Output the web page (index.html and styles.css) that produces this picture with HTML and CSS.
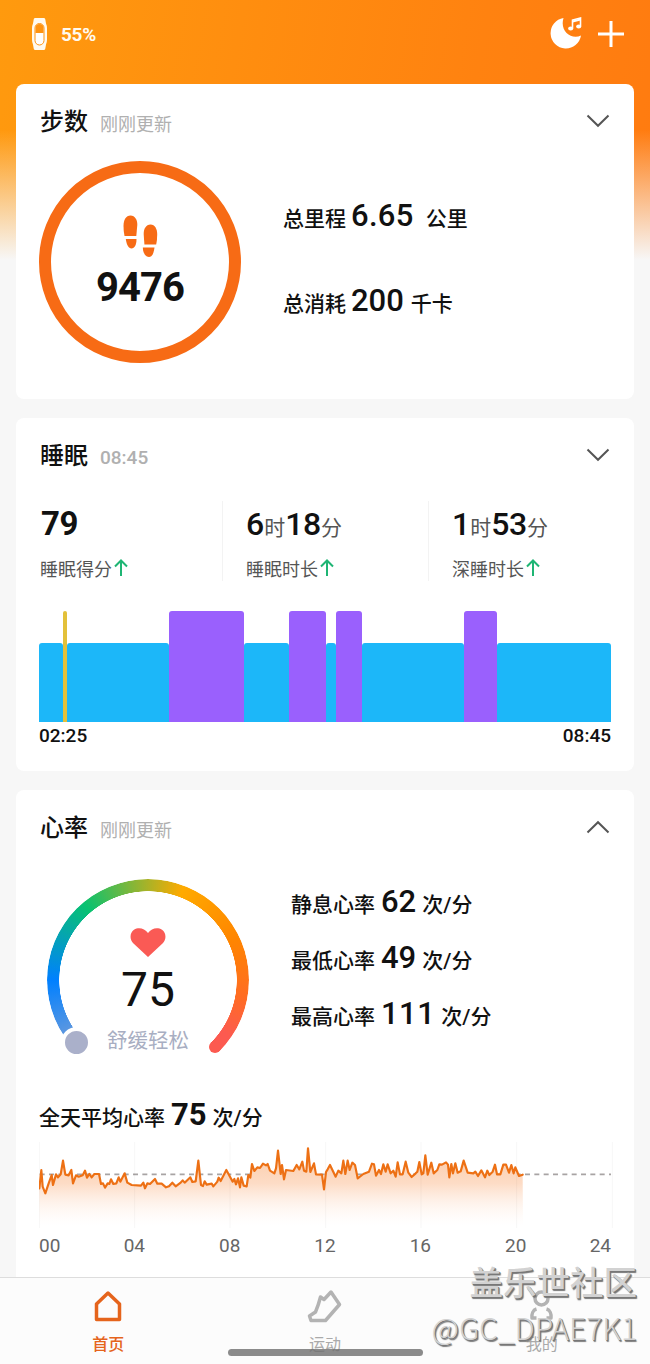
FILE: index.html
```html
<!DOCTYPE html>
<html lang="zh-CN">
<head>
    <meta charset="UTF-8">
    <meta name="viewport" content="width=device-width, initial-scale=1.0">
    <link rel="stylesheet" href="styles.css">
    <title>首页</title>
</head>
<body>
    <header class="topbar">
        <svg class="band-icon" width="15" height="32" viewBox="0 0 15 32">
            <path d="M3 0h9a1.500 1.500 0 0 1 1.300 1.500L14 5.500q1 2 1 5v11q0 3-1 5l-.7 4A1.500 1.500 0 0 1 12 32H3a1.500 1.500 0 0 1-1.300-1.500L1 26.500q-1-2-1-5v-11q0-3 1-5l.7-4A1.500 1.500 0 0 1 3 0z" fill="#fffaf0"/>
            <rect x="3" y="5.500" width="9" height="21.500" rx="4.500" fill="#fff" stroke="#ff9310" stroke-width="1"/>
            <path d="M3.500 15v-5a4 4 0 0 1 8 0v5z" fill="#ff9310"/>
        </svg>
        <span class="battery">55%</span>
        <svg class="moon-icon" width="33" height="32" viewBox="0 0 33 32">
            <path d="M13.500 1A15.300 15.300 0 1 0 31 18.500C21 23 9.500 14 13.500 1z" fill="#fff"/>
            <path d="M22.500 11V3l8-2v8" fill="none" stroke="#fff" stroke-width="1.600"/>
            <path d="M22.500 4.500l8-2" stroke="#fff" stroke-width="2"/>
            <ellipse cx="20.700" cy="11.500" rx="2.600" ry="2" fill="#fff"/>
            <ellipse cx="28.700" cy="9.500" rx="2.600" ry="2" fill="#fff"/>
        </svg>
        <svg class="plus-icon" width="26" height="26" viewBox="0 0 26 26">
            <path d="M13 0v26M0 13h26" stroke="#fff" stroke-width="3"/>
        </svg>
    </header>

    <main class="cards">
        <!-- 步数 -->
        <section class="card card-steps">
            <div class="card-head">
                <h2>步数</h2>
                <span class="sub">刚刚更新</span>
                <svg class="chevron" width="24" height="14" viewBox="0 0 24 14"><path d="M1.500 1.500L12 11.800 22.500 1.500"/></svg>
            </div>
            <div class="steps-body">
                <div class="ring">
                    <svg width="35" height="43" viewBox="0 0 35 43" fill="#f76b15">
                        <path d="M7.500.5C12 .5 14.500 5 14.300 10L13.300 21H1.500Q.5 16 .5 11C.5 5 3 .5 7.500.5z"/>
                        <path d="M2.800 24h10.700c0 6-2 9.500-5 9.500S3.500 29.500 2.800 24z"/>
                        <path d="M27.500 9.500C23 9.500 20.500 14 20.700 19l.7 10.500h11.800q1-5 1-10C34.200 14 32 9.500 27.500 9.500z"/>
                        <path d="M19.800 32.500h11.700c-.7 6-2.500 9.500-5.500 9.500s-6-3-6.200-9.500z"/>
                    </svg>
                    <strong>9476</strong>
                </div>
                <div class="stats stats-steps">
                    <p>总里程<b class="wide">6.65</b>公里</p>
                    <p>总消耗<b>200</b>千卡</p>
                </div>
            </div>
        </section>

        <!-- 睡眠 -->
        <section class="card card-sleep">
            <div class="card-head">
                <h2>睡眠</h2>
                <span class="sub time">08:45</span>
                <svg class="chevron" width="24" height="14" viewBox="0 0 24 14"><path d="M1.500 1.500L12 11.800 22.500 1.500"/></svg>
            </div>
            <div class="sleep-stats">
                <div class="sleep-item">
                    <div class="value score">79</div>
                    <div class="label">睡眠得分<svg width="14" height="18" viewBox="0 0 14 18"><path d="M7 17V2M1 7.500L7 1.500l6 6"/></svg></div>
                </div>
                <div class="sleep-item">
                    <div class="value">6<i>时</i>18<i>分</i></div>
                    <div class="label">睡眠时长<svg width="14" height="18" viewBox="0 0 14 18"><path d="M7 17V2M1 7.500L7 1.500l6 6"/></svg></div>
                </div>
                <div class="sleep-item">
                    <div class="value">1<i>时</i>53<i>分</i></div>
                    <div class="label">深睡时长<svg width="14" height="18" viewBox="0 0 14 18"><path d="M7 17V2M1 7.500L7 1.500l6 6"/></svg></div>
                </div>
            </div>
            <div class="sleep-chart">
                <span class="light" style="flex-grow: 24"></span>
                <span class="awake" style="flex-grow: 3.5"></span>
                <span class="light" style="flex-grow: 102"></span>
                <span class="deep" style="flex-grow: 75.5"></span>
                <span class="light" style="flex-grow: 45"></span>
                <span class="deep" style="flex-grow: 36.5"></span>
                <span class="light" style="flex-grow: 10"></span>
                <span class="deep" style="flex-grow: 26"></span>
                <span class="light" style="flex-grow: 102"></span>
                <span class="deep" style="flex-grow: 33.5"></span>
                <span class="light" style="flex-grow: 114"></span>
            </div>
            <div class="sleep-times"><span>02:25</span><span>08:45</span></div>
        </section>

        <!-- 心率 -->
        <section class="card card-heart">
            <div class="card-head">
                <h2>心率</h2>
                <span class="sub">刚刚更新</span>
                <svg class="chevron" width="24" height="14" viewBox="0 0 24 14"><path d="M1.500 12.500L12 2.200 22.500 12.500"/></svg>
            </div>
            <div class="heart-body">
                <div class="gauge">
                    <div class="gauge-arc"></div>
                    <span class="gauge-end"></span>
                    <span class="gauge-knob"></span>
                    <svg width="36" height="29" viewBox="0 0 36 29"><path d="M18 29L3.500 15.500C-1 11 0 4.500 4 1.800 8.500-1 14.500.2 18 5 21.500.2 27.500-1 32 1.800c4 2.700 5 9.200.5 13.700z" fill="#fa5a55"/></svg>
                    <strong>75</strong>
                    <em>舒缓轻松</em>
                </div>
                <div class="stats stats-heart">
                    <p>静息心率<b>62</b>次/分</p>
                    <p>最低心率<b>49</b>次/分</p>
                    <p>最高心率<b class="tracked">111</b>次/分</p>
                </div>
            </div>
            <p class="average">全天平均心率<b>75</b>次/分</p>
            <svg class="heart-chart" width="574" height="86" viewBox="0 0 1722 258">
                <defs>
                    <linearGradient id="fill" x1="0" y1="0" x2="0" y2="1">
                        <stop offset="0" stop-color="#fbc9a4"/>
                        <stop offset=".45" stop-color="#fddcc6"/>
                        <stop offset="1" stop-color="#fff" stop-opacity=".2"/>
                    </linearGradient>
                </defs>
                <path d="M2 97H1716" stroke="#a8a4a4" stroke-width="5" stroke-dasharray="15 13"/>
                <polygon id="area" fill="url(#fill)"/>
                <path d="M1 0V258M287 0V258M573 0V258M860 0V258M1146 0V258M1433 0V258M1720 0V258" stroke="#000" stroke-opacity=".035" stroke-width="3"/>
                <polyline id="line" fill="none" stroke="#ed7014" stroke-width="6.500" stroke-linejoin="round" stroke-linecap="round"/>
            </svg>
            <div class="hours">
                <span>00</span><span>04</span><span>08</span><span>12</span><span>16</span><span>20</span><span>24</span>
            </div>
        </section>
    </main>

    <nav class="tabbar">
        <a class="tab active">
            <svg width="36" height="36" viewBox="0 0 36 36"><path d="M18 5L6.500 16v15.500h23V16z"/></svg>
            首页
        </a>
        <a class="tab">
            <svg width="36" height="36" viewBox="0 0 36 36"><path d="M13.500 9l3.500 2.500L24 4l8.500 12.500L18.500 32.500H4L2.500 28l6-4q3-7 5-15z"/></svg>
            运动
        </a>
        <a class="tab">
            <svg width="36" height="36" viewBox="0 0 36 36"><circle cx="17.500" cy="10.500" r="6.500"/><path d="M12.500 21c-3.500 1-5 5-4.500 9h4.500M22.500 21c3.500 1 5 5 4.500 9h-4.500"/></svg>
            我的
        </a>
    </nav>
    <div class="home-indicator"></div>
    <div class="watermark">
        <div class="wm-site">盖乐世社区</div>
        <div class="wm-user">@GC_DPAE7K1</div>
    </div>

    <script>
        // 全天心率曲线
        const points = [
            [1,139],[7,84],[11,134],[19,154],[29,124],[38,99],[42,129],[51,97],[57,106],[65,97],[72,56],[79,98],[89,100],
            [97,84],[102,124],[111,100],[119,104],[131,100],[138,86],[144,107],[151,96],[158,106],[166,96],[180,96],
            [186,126],[192,124],[198,137],[206,124],[211,126],[216,112],[223,126],[232,124],[239,106],[244,119],[257,94],
            [265,122],[278,129],[306,131],[313,122],[318,139],[325,124],[333,126],[348,111],[355,125],[368,125],[381,136],
            [390,133],[400,122],[410,133],[425,122],[431,115],[437,122],[454,106],[460,120],[470,118],[478,56],[486,129],
            [492,132],[497,118],[503,128],[518,125],[523,133],[535,119],[539,107],[545,117],[562,84],[573,104],[581,119],
            [586,111],[591,127],[597,109],[603,136],[607,106],[614,131],[623,133],[628,99],[634,107],[639,66],[646,87],
            [655,76],[663,78],[672,65],[681,70],[686,66],[693,86],[706,94],[711,79],[717,26],[725,96],[729,69],[735,112],
            [741,84],[763,87],[773,69],[781,82],[790,59],[795,86],[802,89],[807,19],[814,90],[825,64],[831,97],[849,98],
            [855,142],[861,90],[866,82],[873,69],[890,104],[898,86],[907,94],[913,56],[919,96],[926,56],[932,84],[940,62],
            [948,69],[956,109],[973,96],[990,89],[999,65],[1005,67],[1011,101],[1020,84],[1026,96],[1033,67],[1040,89],
            [1046,67],[1055,94],[1063,86],[1070,104],[1076,61],[1083,97],[1091,97],[1100,59],[1108,92],[1118,105],
            [1130,94],[1135,89],[1141,60],[1148,97],[1153,94],[1159,40],[1166,98],[1177,62],[1184,94],[1195,84],[1201,67],
            [1209,68],[1221,61],[1227,68],[1231,106],[1237,66],[1242,94],[1249,64],[1256,92],[1265,88],[1274,56],
            [1286,92],[1303,94],[1309,89],[1317,102],[1327,85],[1338,106],[1345,86],[1351,99],[1361,89],[1368,68],
            [1374,97],[1384,97],[1393,68],[1401,68],[1410,92],[1417,69],[1424,94],[1429,76],[1440,102],[1451,98]
        ];
        const line = points.map(p => p.join(',')).join(' ');
        document.getElementById('line').setAttribute('points', line);
        document.getElementById('area').setAttribute('points', line + ' 1452,254 1,254');
    </script>
</body>
</html>
```
FILE: styles.css
```css
* {
    box-sizing: border-box;
}

body {
    position: relative;
    display: flex;
    flex-direction: column;
    width: 650px;
    height: 1364px;
    margin: 0;
    overflow: hidden;
    font-family: Roboto, "Noto Sans CJK SC", sans-serif;
    color: #111;
    background: linear-gradient(to bottom, rgba(247, 247, 247, 0) 130px, #f7f7f7 260px),
                linear-gradient(100deg, #ff9a0e 0%, #ff8210 55%, #ff7410 100%);
}

h2, p {
    margin: 0;
}

/* Barra superior */
.topbar {
    display: flex;
    align-items: center;
    flex: none;
    height: 84px;
    padding: 0 26px 17px 32px;
    color: #fffaf0;
}

.battery {
    margin: 1px 0 0 14px;
    font-size: 19px;
    font-weight: 700;
    letter-spacing: -0.300px;
}

.moon-icon {
    margin: -1px 0 0 auto;
}

.plus-icon {
    margin-left: 15px;
}

/* Tarjetas */
.cards {
    display: flex;
    flex-direction: column;
    flex: 1;
    gap: 19px;
    min-height: 0;
    padding: 0 16px;
    overflow: hidden;
}

.card {
    flex: none;
    padding: 0 24px 0 23px;
    border-radius: 8px;
    background: #fff;
}

.card-steps {
    height: 315px;
}

.card-sleep {
    height: 353px;
}

.card-heart {
    height: 500px;
}

.card-head {
    display: flex;
    align-items: center;
    height: 76px;
    padding-left: 1px;
}

.card-head h2 {
    margin-top: -5px;
    font-size: 24px;
    font-weight: 500;
}

.sub {
    margin: 2px 0 0 12px;
    font-size: 18px;
    color: #b0b0b0;
}

.sub.time {
    font-size: 19px;
    font-weight: 500;
}

.chevron {
    margin: -3px 0 0 auto;
    fill: none;
    stroke: #555;
    stroke-width: 2;
}

/* Pasos */
.steps-body {
    display: flex;
    padding-top: 1px;
}

.ring {
    display: flex;
    flex-direction: column;
    align-items: center;
    width: 202px;
    height: 202px;
    padding-top: 42px;
    border: 12.500px solid #f76b15;
    border-radius: 50%;
}

.ring strong {
    margin-top: 7px;
    font-size: 40px;
    font-weight: 700;
    line-height: 46px;
    letter-spacing: -1px;
}

.stats p, .average {
    height: 40px;
    font-size: 21px;
    font-weight: 500;
    line-height: 40px;
    white-space: nowrap;
}

.stats b, .average b {
    margin: 0 6px;
    font-size: 31px;
    font-weight: 500;
    line-height: 0;
}

.stats-steps {
    display: grid;
    gap: 45px;
    align-content: start;
    padding: 38px 0 0 42px;
}

.stats-steps b {
    margin: 0 7px 0 5px;
}

.stats-steps .wide {
    margin-right: 12px;
    letter-spacing: 0.300px;
}

/* Sueño */
.sleep-stats {
    display: flex;
    height: 87px;
    padding-top: 7px;
}

.sleep-item {
    flex: none;
    width: 206px;
    height: 80px;
    padding-left: 23px;
    border-left: 1px solid #f3f3f3;
}

.sleep-item:first-child {
    width: 183px;
    padding-left: 1px;
    border-left: none;
}

.sleep-item:last-child {
    width: 180px;
}

.sleep-item .value {
    height: 48px;
    font-size: 32px;
    font-weight: 500;
    line-height: 46px;
    letter-spacing: -0.500px;
    white-space: nowrap;
}

.sleep-item .score {
    padding-left: 1px;
    font-size: 33px;
    font-weight: 700;
}

.value i {
    margin: 0 0.500px;
    font-size: 21px;
    font-style: normal;
    font-weight: 400;
    line-height: 0;
    color: #555;
}

.label {
    display: flex;
    align-items: center;
    margin-top: 7px;
    font-size: 18px;
    line-height: 28px;
    color: #555;
}

.label svg {
    margin: -4px 0 0 2px;
    fill: none;
    stroke: #1fb574;
    stroke-width: 2;
}

.sleep-chart {
    display: flex;
    align-items: flex-end;
    width: 572px;
    height: 111px;
    margin-top: 30px;
}

.sleep-chart span {
    flex-basis: 0;
    border-radius: 3px 3px 0 0;
}

.light {
    height: 79px;
    background: #1cb7f9;
}

.deep {
    height: 111px;
    background: #9a60fd;
}

.awake {
    height: 111px;
    background: #e3c13a;
}

.sleep-times {
    display: flex;
    justify-content: space-between;
    width: 572px;
    font-size: 19px;
    font-weight: 500;
    line-height: 28px;
}

/* Ritmo cardíaco */
.heart-body {
    display: flex;
    height: 222px;
    padding: 13px 0 0 8px;
}

.gauge {
    position: relative;
    display: flex;
    flex-direction: column;
    align-items: center;
    width: 202px;
    height: 202px;
    padding-top: 49px;
}

.gauge-arc {
    position: absolute;
    inset: 0;
    border-radius: 50%;
    background: conic-gradient(from 225deg, #5c97e0 0 12deg, #0080ff 45deg, #08c270 95deg, #ffaa00 156deg, #ff8500 200deg, #ff6c22 235deg, #fc5a50 260deg 270deg, transparent 270deg);
    -webkit-mask: radial-gradient(circle, transparent 88.500px, #000 89px);
    mask: radial-gradient(circle, transparent 88.500px, #000 89px);
}

.gauge-end {
    position: absolute;
    left: 162px;
    top: 162px;
    width: 12px;
    height: 12px;
    border-radius: 50%;
    background: #fc5a50;
}

.gauge-knob {
    position: absolute;
    left: 14px;
    top: 148px;
    width: 31px;
    height: 31px;
    border: 4px solid #fff;
    border-radius: 50%;
    background: #aab0ca;
}

.gauge strong {
    margin-top: 5px;
    font-size: 48px;
    font-weight: 400;
    line-height: 56px;
}

.gauge em {
    margin-top: 7px;
    font-size: 20.500px;
    font-style: normal;
    line-height: 32px;
    color: #a8aec2;
}

.stats-heart {
    display: grid;
    gap: 16px;
    align-content: start;
    padding: 6px 0 0 42px;
}

.stats-heart .tracked {
    letter-spacing: 0.500px;
}

.average {
    margin-top: 10px;
}

.average b {
    font-weight: 700;
}

.heart-chart {
    display: block;
    margin-top: 4px;
}

.hours {
    display: grid;
    grid-template-columns: 1fr repeat(5, 2fr) 1fr;
    width: 572px;
    margin-top: 5px;
    font-size: 19px;
    line-height: 26px;
    text-align: center;
    color: #666;
}

.hours span:first-child {
    text-align: left;
}

.hours span:last-child {
    text-align: right;
}

/* Navegación inferior */
.tabbar {
    display: flex;
    flex: none;
    height: 87px;
    border-top: 1px solid #ddd;
    background: #fcfcfc;
}

.tab {
    display: flex;
    flex-direction: column;
    align-items: center;
    flex: 1;
    padding-top: 10px;
    font-size: 16px;
    line-height: 24px;
    color: #aaa;
}

.tab svg {
    margin-bottom: 9px;
    fill: none;
    stroke: #b3b3b3;
    stroke-width: 3.500;
    stroke-linejoin: round;
}

.tab.active {
    font-weight: 500;
    color: #e5641c;
}

.tab.active svg {
    stroke: #e5641c;
}

.home-indicator {
    position: absolute;
    left: 228px;
    top: 1349px;
    width: 195px;
    height: 7px;
    border-radius: 4px;
    background: rgba(110, 110, 110, 0.8);
}

.watermark {
    position: absolute;
    right: 13px;
    top: 1261px;
    text-align: right;
    white-space: nowrap;
    color: #d2d2d2;
    text-shadow: 1px 1px 0 #777, 1.500px 1.500px 1px #777;
}

.wm-site {
    font-size: 33.500px;
    font-weight: 500;
    line-height: 46px;
}

.wm-user {
    font-family: "Noto Sans CJK SC", sans-serif;
    font-size: 30px;
    font-weight: 300;
    line-height: 40px;
}
```
